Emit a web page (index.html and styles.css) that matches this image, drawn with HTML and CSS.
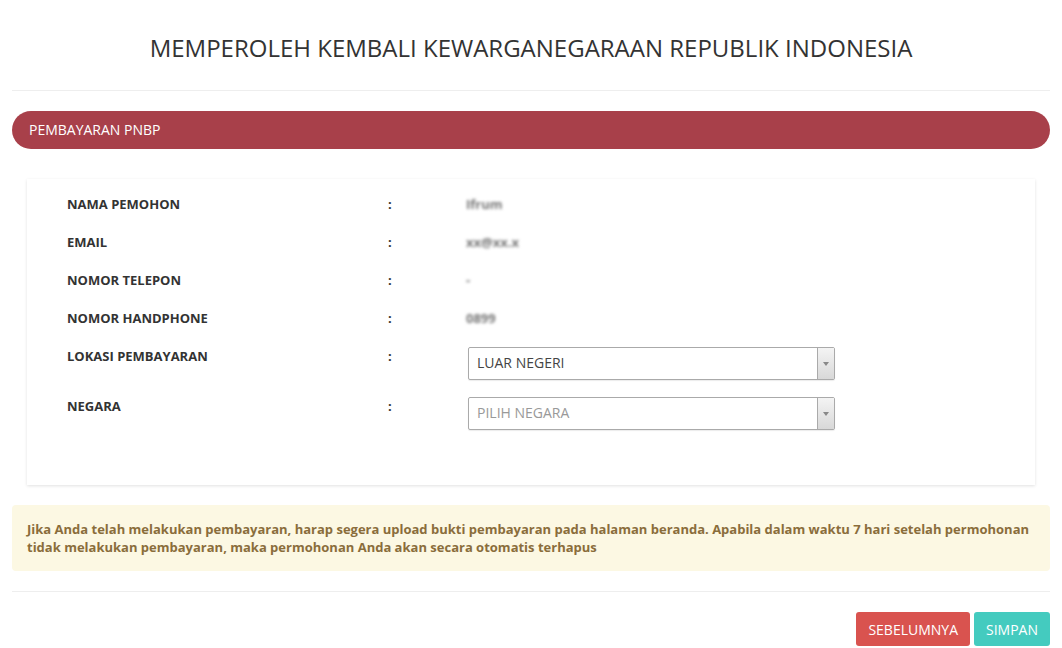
FILE: index.html
```html
<!DOCTYPE html>
<html lang="id">
<head>
    <meta charset="UTF-8">
    <meta name="viewport" content="width=device-width, initial-scale=1.0">
    <title>Memperoleh Kembali Kewarganegaraan Republik Indonesia</title>
    <link rel="stylesheet" href="styles.css">
</head>
<body>
    <div class="page">
        <header class="page-head">
            <h1>MEMPEROLEH KEMBALI KEWARGANEGARAAN REPUBLIK INDONESIA</h1>
        </header>

        <div class="section-bar">PEMBAYARAN PNBP</div>

        <div class="card">
            <div class="row">
                <div class="label">NAMA PEMOHON</div>
                <div class="colon">:</div>
                <div class="value blur">Ifrum</div>
            </div>
            <div class="row">
                <div class="label">EMAIL</div>
                <div class="colon">:</div>
                <div class="value blur">xx@xx.x</div>
            </div>
            <div class="row">
                <div class="label">NOMOR TELEPON</div>
                <div class="colon">:</div>
                <div class="value blur">-</div>
            </div>
            <div class="row">
                <div class="label">NOMOR HANDPHONE</div>
                <div class="colon">:</div>
                <div class="value blur">0899</div>
            </div>
            <div class="row row-select">
                <div class="label">LOKASI PEMBAYARAN</div>
                <div class="colon">:</div>
                <div class="select">
                    <span class="select-text">LUAR NEGERI</span>
                    <span class="select-arrow"><b></b></span>
                </div>
            </div>
            <div class="row row-select">
                <div class="label">NEGARA</div>
                <div class="colon">:</div>
                <div class="select">
                    <span class="select-text placeholder">PILIH NEGARA</span>
                    <span class="select-arrow"><b></b></span>
                </div>
            </div>
        </div>

        <div class="alert">
            Jika Anda telah melakukan pembayaran, harap segera upload bukti pembayaran pada halaman beranda. Apabila dalam waktu 7 hari setelah permohonan tidak melakukan pembayaran, maka permohonan Anda akan secara otomatis terhapus
        </div>

        <div class="actions">
            <button class="btn btn-prev">SEBELUMNYA</button>
            <button class="btn btn-save">SIMPAN</button>
        </div>
    </div>
</body>
</html>
```

FILE: styles.css
```css
/* global */
* { box-sizing: border-box; }
html, body {
    margin: 0;
    padding: 0;
    font-family: "Open Sans", "Liberation Sans", Arial, sans-serif;
    font-size: 13px;
    line-height: 18px;
    color: #333;
    background-color: #fff;
}
.page {
    padding: 0 12px;
}
/* title */
.page-head {
    padding: 35px 0 29px;
    border-bottom: 1px solid #eee;
    text-align: center;
}
.page-head h1 {
    margin: 0;
    font-size: 24px;
    line-height: 26px;
    font-weight: 400;
    color: #333;
}
/* section bar */
.section-bar {
    margin-top: 20px;
    height: 38px;
    line-height: 38px;
    padding: 0 17px;
    font-size: 14px;
    background-color: #a8404a;
    color: #fff;
    border-radius: 19px;
}
/* card */
.card {
    margin: 30px 15px 20px;
    padding: 16px 40px 55px;
    background-color: #fff;
    box-shadow: 0 1px 3px rgba(0, 0, 0, 0.12);
}
.row {
    display: grid;
    grid-template-columns: 321px 78px 369px;
    margin-bottom: 20px;
}
.row-select {
    margin-bottom: 17px;
}
.row:last-child {
    margin-bottom: 0;
}
.label {
    font-weight: 700;
}
.colon {
    font-weight: 700;
}
.value {
    color: #777;
    font-weight: 700;
}
.blur {
    filter: blur(1.4px);
}
/* select box */
.select {
    display: flex;
    height: 33px;
    margin-left: 2px;
    border: 1px solid #aaa;
    border-radius: 2px;
    background-color: #fff;
    box-shadow: 0 1px 1px rgba(0, 0, 0, 0.08);
}
.select-text {
    flex: 1;
    padding: 0 8px;
    line-height: 30px;
    font-size: 14px;
    color: #444;
}
.select-text.placeholder {
    color: #999;
}
.select-arrow {
    width: 17px;
    display: flex;
    align-items: center;
    justify-content: center;
    border-left: 1px solid #aaa;
    background: linear-gradient(#f4f4f4, #d8d8d8);
}
.select-arrow b {
    width: 0;
    height: 0;
    border-left: 3px solid transparent;
    border-right: 3px solid transparent;
    border-top: 4px solid #888;
}
/* alert */
.alert {
    padding: 15px;
    background-color: #fcf8e3;
    color: #8a6d3b;
    font-weight: 700;
    border-radius: 4px;
}
/* actions */
.actions {
    margin-top: 20px;
    padding-top: 20px;
    border-top: 1px solid #eee;
    display: flex;
    justify-content: flex-end;
    gap: 4px;
}
.btn {
    height: 34px;
    padding: 0 12px;
    border: none;
    border-radius: 3px;
    font-family: inherit;
    font-size: 14px;
    color: #fff;
    cursor: pointer;
}
.btn-prev {
    background-color: #d9534f;
}
.btn-save {
    background-color: #44cbbf;
}
```
